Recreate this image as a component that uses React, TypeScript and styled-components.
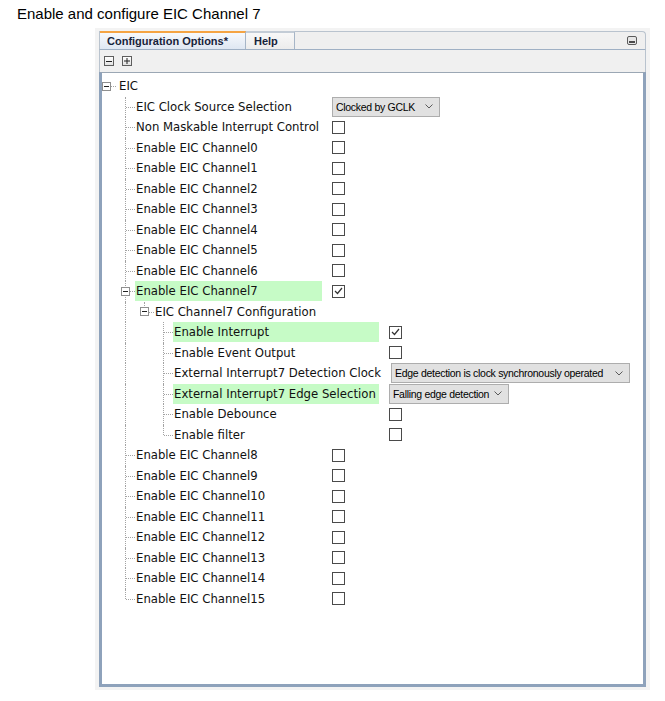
import React from "react";
import styled, { createGlobalStyle } from "styled-components";

const GlobalStyle = createGlobalStyle`
  html, body { margin: 0; padding: 0; background: #ffffff; }
  body { font-family: "DejaVu Sans", sans-serif; color: #000; }
`;

const Title = styled.h1`
  margin: 0;
  padding: 5px 0 0 17px;
  font: 400 15px/17px "Liberation Sans", Arial, sans-serif;
  color: #000;
`;

const Frame = styled.div`
  margin: 6px 0 0 95px;
  width: 555px;
  height: 662px;
  box-sizing: border-box;
  padding: 3px 4px 3px 4px;
  background: #f3f3f3;
  display: flex;
`;

const Panel = styled.div`
  flex: 1;
  min-width: 0;
  display: flex;
  flex-direction: column;
`;

const TabBar = styled.div`
  height: 17px;
  display: flex;
  align-items: stretch;
  background: #efefef;
  border: 1px solid #b9c3ce;
  border-bottom-color: #9fb0c4;
  border-radius: 0 4px 0 0;
`;

const Tab = styled.div<{ $active?: boolean }>`
  display: flex;
  align-items: center;
  margin-top: -1px;
  padding: ${(p) => (p.$active ? "0 17px 0 7px" : "0 16px 0 8px")};
  border-top: 2px solid ${(p) => (p.$active ? "#f5a443" : "#c3ccd6")};
  border-right: 1px solid #a6b5c7;
  background: ${(p) =>
    p.$active
      ? "linear-gradient(#f7f9fc, #dfe7f2)"
      : "linear-gradient(#f8f8f8, #ececec)"};
  font: 700 11px/1 "Liberation Sans", Arial, sans-serif;
  color: #17233a;
  white-space: nowrap;
`;

const MinButton = styled.div`
  margin-left: auto;
  margin-right: 8px;
  align-self: center;
  display: flex;
`;

const Toolbar = styled.div`
  height: 22px;
  display: flex;
  align-items: center;
  gap: 8px;
  padding-left: 4px;
  background: #f0f0f0;
  border-left: 1px solid #b9c3ce;
  border-right: 1px solid #b9c3ce;
`;

const ToolButton = styled.div`
  width: 10px;
  height: 10px;
  box-sizing: border-box;
  border: 1px solid #5e5e5e;
  background: linear-gradient(#ffffff, #e2e2e2);
  display: flex;
  align-items: center;
  justify-content: center;
`;

const TreeArea = styled.div`
  flex: 1;
  background: #ffffff;
  border: 3px solid #8ea2bb;
  border-top: 1px solid #9ba7b4;
  padding-top: 3px;
`;

const Row = styled.div`
  display: flex;
  align-items: center;
  height: 20.5px;
`;

const GuideCol = styled.div<{
  $w: number;
  $up?: boolean;
  $down?: boolean;
  $across?: boolean;
}>`
  position: relative;
  align-self: stretch;
  flex: 0 0 ${(p) => p.$w}px;
  display: flex;
  align-items: center;
  &::before {
    content: "";
    position: absolute;
    left: 4px;
    top: ${(p) => (p.$up ? "0" : "50%")};
    bottom: ${(p) => (p.$down ? "0" : "50%")};
    border-left: ${(p) => (p.$up || p.$down ? "1px dotted #a3a3a3" : "none")};
  }
  &::after {
    content: "";
    position: absolute;
    left: 5px;
    right: 0;
    top: 50%;
    border-top: ${(p) => (p.$across ? "1px dotted #a3a3a3" : "none")};
  }
`;

const Expander = styled.div`
  position: relative;
  z-index: 1;
  width: 9px;
  height: 9px;
  box-sizing: border-box;
  border: 1px solid #8f8f8f;
  background: #ffffff;
  display: flex;
  align-items: center;
  justify-content: center;
`;

const Label = styled.div<{ $w?: number; $hl?: boolean; $pad?: number }>`
  flex: 0 0 ${(p) => (p.$w ? `${p.$w}px` : "auto")};
  box-sizing: border-box;
  height: 20px;
  display: flex;
  align-items: center;
  padding-left: ${(p) => p.$pad ?? 1}px;
  background: ${(p) => (p.$hl ? "#c6fbc6" : "transparent")};
  font-size: 11.7px;
  white-space: nowrap;
  color: #111;
`;

const Value = styled.div`
  margin-left: 10px;
  display: flex;
  align-items: center;
`;

const Box = styled.div`
  width: 13px;
  height: 13px;
  box-sizing: border-box;
  border: 1px solid #4a4a4a;
  background: #ffffff;
  display: flex;
  align-items: center;
  justify-content: center;
`;

const Select = styled.div<{ $w: number }>`
  width: ${(p) => p.$w}px;
  height: 20px;
  box-sizing: border-box;
  border: 1px solid #adadad;
  background: #e1e1e1;
  display: flex;
  align-items: center;
  justify-content: space-between;
  padding: 0 6px 0 3px;
  font: 400 10.5px/1 "Liberation Sans", Arial, sans-serif;
  letter-spacing: -0.3px;
  color: #000;
  white-space: nowrap;
`;

type Val =
  | { kind: "check"; on: boolean }
  | { kind: "select"; text: string; width: number };

type TreeNode = {
  label: string;
  hl?: boolean;
  value?: Val;
  children?: TreeNode[];
};

const cb = (on = false): Val => ({ kind: "check", on });

const tree: TreeNode = {
  label: "EIC",
  children: [
    {
      label: "EIC Clock Source Selection",
      value: { kind: "select", text: "Clocked by GCLK", width: 108 },
    },
    { label: "Non Maskable Interrupt Control", value: cb() },
    ...[0, 1, 2, 3, 4, 5, 6].map((n) => ({
      label: `Enable EIC Channel${n}`,
      value: cb(),
    })),
    {
      label: "Enable EIC Channel7",
      hl: true,
      value: cb(true),
      children: [
        {
          label: "EIC Channel7 Configuration",
          children: [
            { label: "Enable Interrupt", hl: true, value: cb(true) },
            { label: "Enable Event Output", value: cb() },
            {
              label: "External Interrupt7 Detection Clock",
              value: {
                kind: "select",
                text: "Edge detection is clock synchronously operated",
                width: 239,
              },
            },
            {
              label: "External Interrupt7 Edge Selection",
              hl: true,
              value: { kind: "select", text: "Falling edge detection", width: 120 },
            },
            { label: "Enable Debounce", value: cb() },
            { label: "Enable filter", value: cb() },
          ],
        },
      ],
    },
    ...[8, 9, 10, 11, 12, 13, 14, 15].map((n) => ({
      label: `Enable EIC Channel${n}`,
      value: cb(),
    })),
  ],
};

const labelWidth: Record<number, number | undefined> = { 1: 187, 3: 206 };

type Flat = {
  node: TreeNode;
  depth: number;
  last: boolean;
  cont: boolean[];
};

function flatten(n: TreeNode, depth: number, last: boolean, cont: boolean[], out: Flat[]) {
  out.push({ node: n, depth, last, cont });
  const kids = n.children ?? [];
  kids.forEach((k, i) => {
    flatten(k, depth + 1, i === kids.length - 1, [...cont, depth === 0 ? false : !last], out);
  });
  return out;
}

const rows = flatten(tree, 0, true, [], []);

const MinusGlyph = ({ size = 5 }: { size?: number }) => (
  <svg width={size} height="1" viewBox={`0 0 ${size} 1`}>
    <rect width={size} height="1" fill="#222" />
  </svg>
);

const PlusGlyph = () => (
  <svg width="6" height="6" viewBox="0 0 6 6">
    <rect y="2.5" width="6" height="1" fill="#222" />
    <rect x="2.5" width="1" height="6" fill="#222" />
  </svg>
);

const CheckMark = () => (
  <svg width="9" height="8" viewBox="0 0 9 8">
    <path d="M1 4 L3.5 6.5 L8 1" fill="none" stroke="#333" strokeWidth="1.2" />
  </svg>
);

const Chevron = () => (
  <svg width="8" height="5" viewBox="0 0 8 5">
    <path d="M0.5 0.5 L4 4 L7.5 0.5" fill="none" stroke="#5a5a5a" strokeWidth="1" />
  </svg>
);

const MinimizeIcon = () => (
  <svg width="10" height="9" viewBox="0 0 10 9">
    <rect x="0.5" y="0.5" width="9" height="8" rx="1.5" fill="#e6e6e6" stroke="#5b5b5b" />
    <rect x="2" y="5" width="6" height="2" fill="#4a4a4a" />
  </svg>
);

function ValueCell({ v }: { v: Val }) {
  if (v.kind === "check") {
    return (
      <Value>
        <Box>{v.on && <CheckMark />}</Box>
      </Value>
    );
  }
  return (
    <Value>
      <Select $w={v.width}>
        <span>{v.text}</span>
        <Chevron />
      </Select>
    </Value>
  );
}

function TreeRow({ r }: { r: Flat }) {
  const { node, depth, last, cont } = r;
  const hasKids = !!node.children?.length;
  const cols = [];
  for (let i = 0; i < depth; i++) {
    cols.push(<GuideCol key={i} $w={19} $up={cont[i]} $down={cont[i]} />);
  }
  cols.push(
    <GuideCol key="own" $w={14} $up={depth > 0} $down={depth > 0 && !last} $across>
      {hasKids && (
        <Expander>
          <MinusGlyph />
        </Expander>
      )}
    </GuideCol>
  );
  return (
    <Row>
      {cols}
      <Label $w={labelWidth[depth]} $hl={node.hl} $pad={depth === 0 ? 3 : 1}>
        {node.label}
      </Label>
      {node.value && <ValueCell v={node.value} />}
    </Row>
  );
}

export default function App() {
  return (
    <>
      <GlobalStyle />
      <Title>Enable and configure EIC Channel 7</Title>
      <Frame>
        <Panel>
          <TabBar>
            <Tab $active>Configuration Options*</Tab>
            <Tab>Help</Tab>
            <MinButton>
              <MinimizeIcon />
            </MinButton>
          </TabBar>
          <Toolbar>
            <ToolButton>
              <MinusGlyph size={6} />
            </ToolButton>
            <ToolButton>
              <PlusGlyph />
            </ToolButton>
          </Toolbar>
          <TreeArea>
            {rows.map((r, i) => (
              <TreeRow key={i} r={r} />
            ))}
          </TreeArea>
        </Panel>
      </Frame>
    </>
  );
}
